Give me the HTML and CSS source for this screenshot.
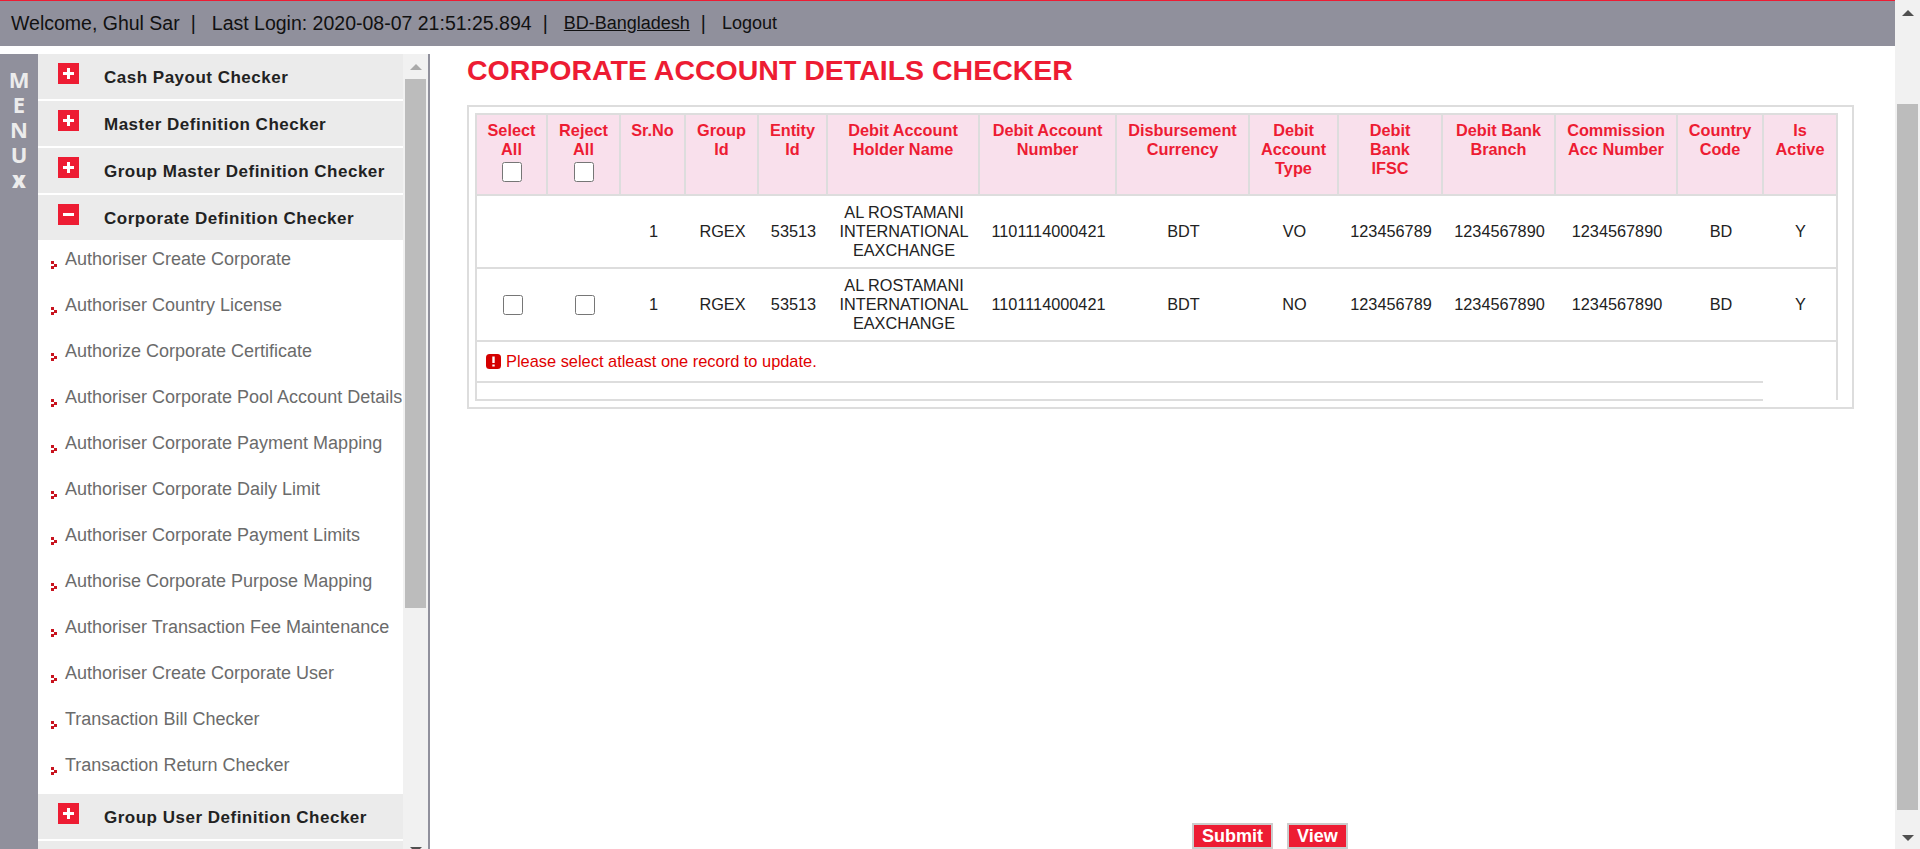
FILE: index.html
```html
<!DOCTYPE html>
<html lang="en">
<head>
    <meta charset="UTF-8">
    <title>Corporate Account Details Checker</title>
    <link rel="stylesheet" href="styles.css">
</head>
<body>
    <div class="page">
        <div class="topbar">
            <span>Welcome, Ghul Sar</span><span class="sep">|</span>
            <span>Last Login: 2020-08-07 21:51:25.894</span><span class="sep">|</span>
            <a href="#" class="country">BD-Bangladesh</a><span class="sep">|</span>
            <a href="#" class="logout">Logout</a>
        </div>
        <div class="layout">
            <aside class="sidebar">
                <div class="menu-tab"><span>M</span><span>E</span><span>N</span><span>U</span><b>x</b></div>
                <nav class="menu">
                    <div class="menu-head"><i class="toggle"><svg viewBox="0 0 21 21"><path d="M5 10.5h11M10.5 5v11"/></svg></i>Cash Payout Checker</div>
                    <div class="menu-head"><i class="toggle"><svg viewBox="0 0 21 21"><path d="M5 10.5h11M10.5 5v11"/></svg></i>Master Definition Checker</div>
                    <div class="menu-head"><i class="toggle"><svg viewBox="0 0 21 21"><path d="M5 10.5h11M10.5 5v11"/></svg></i>Group Master Definition Checker</div>
                    <div class="menu-head open"><i class="toggle"><svg viewBox="0 0 21 21"><path d="M5 10.5h11"/></svg></i>Corporate Definition Checker</div>
                    <ul class="submenu">
                        <li>Authoriser Create Corporate</li>
                        <li>Authoriser Country License</li>
                        <li>Authorize Corporate Certificate</li>
                        <li>Authoriser Corporate Pool Account Details</li>
                        <li>Authoriser Corporate Payment Mapping</li>
                        <li>Authoriser Corporate Daily Limit</li>
                        <li>Authoriser Corporate Payment Limits</li>
                        <li>Authorise Corporate Purpose Mapping</li>
                        <li>Authoriser Transaction Fee Maintenance</li>
                        <li>Authoriser Create Corporate User</li>
                        <li>Transaction Bill Checker</li>
                        <li>Transaction Return Checker</li>
                    </ul>
                    <div class="menu-head"><i class="toggle"><svg viewBox="0 0 21 21"><path d="M5 10.5h11M10.5 5v11"/></svg></i>Group User Definition Checker</div>
                    <div class="menu-head"></div>
                </nav>
                <div class="side-scroll">
                    <span class="arrow-up"></span>
                    <span class="side-thumb"></span>
                    <span class="arrow-down"></span>
                </div>
            </aside>
            <main class="content">
                <h1>CORPORATE ACCOUNT DETAILS CHECKER</h1>
                <div class="frame">
                    <table class="grid">
                        <colgroup>
                            <col class="c71"><col class="c73"><col class="c65"><col class="c73"><col class="c69">
                            <col class="c152"><col class="c137"><col class="c133"><col class="c89"><col class="c104">
                            <col class="c113"><col class="c122"><col class="c86"><col class="c74">
                        </colgroup>
                        <thead>
                            <tr>
                                <th>Select All<br><input type="checkbox"></th>
                                <th>Reject All<br><input type="checkbox"></th>
                                <th>Sr.No</th>
                                <th>Group Id</th>
                                <th>Entity Id</th>
                                <th>Debit Account Holder Name</th>
                                <th>Debit Account Number</th>
                                <th>Disbursement Currency</th>
                                <th>Debit Account Type</th>
                                <th>Debit<br>Bank<br>IFSC</th>
                                <th>Debit Bank Branch</th>
                                <th>Commission Acc Number</th>
                                <th>Country Code</th>
                                <th>Is Active</th>
                            </tr>
                        </thead>
                        <tbody>
                            <tr>
                                <td></td>
                                <td></td>
                                <td>1</td>
                                <td>RGEX</td>
                                <td>53513</td>
                                <td>AL ROSTAMANI INTERNATIONAL EAXCHANGE</td>
                                <td>1101114000421</td>
                                <td>BDT</td>
                                <td>VO</td>
                                <td>123456789</td>
                                <td>1234567890</td>
                                <td>1234567890</td>
                                <td>BD</td>
                                <td>Y</td>
                            </tr>
                            <tr>
                                <td><input type="checkbox"></td>
                                <td><input type="checkbox"></td>
                                <td>1</td>
                                <td>RGEX</td>
                                <td>53513</td>
                                <td>AL ROSTAMANI INTERNATIONAL EAXCHANGE</td>
                                <td>1101114000421</td>
                                <td>BDT</td>
                                <td>NO</td>
                                <td>123456789</td>
                                <td>1234567890</td>
                                <td>1234567890</td>
                                <td>BD</td>
                                <td>Y</td>
                            </tr>
                            <tr class="msg-row">
                                <td colspan="13" class="msg">
                                    <svg class="msg-icon" viewBox="0 0 15 15"><rect width="15" height="15" rx="3.5"/><path d="M7.5 2.5v6.5M7.5 10.5v2"/></svg>Please select atleast one record to update.
                                </td>
                                <td rowspan="2" class="filler"></td>
                            </tr>
                            <tr class="blank-row">
                                <td colspan="13"></td>
                            </tr>
                        </tbody>
                    </table>
                </div>
                <div class="actions">
                    <button type="button" class="btn">Submit</button>
                    <button type="button" class="btn">View</button>
                </div>
            </main>
        </div>
    </div>
    <div class="page-scroll">
        <span class="arrow-up"></span>
        <span class="page-thumb"></span>
        <span class="arrow-down"></span>
    </div>
</body>
</html>
```

FILE: styles.css
```css
html, body {
    margin: 0;
    padding: 0;
    height: 100%;
    overflow: hidden;
}

body {
    display: flex;
    font-family: "Liberation Sans", Arial, sans-serif;
    background-color: #ffffff;
    color: #222222;
}

.page {
    flex: 1;
    min-width: 0;
    display: flex;
    flex-direction: column;
}

/* Barra superior */
.topbar {
    height: 46px;
    box-sizing: border-box;
    border-top: 1px solid #ed1c33;
    background-color: #90909c;
    display: flex;
    align-items: center;
    padding-left: 11px;
    font-size: 19.5px;
    color: #111111;
    flex: none;
}

.topbar .sep {
    margin: 0 16px 0 11px;
}

.topbar a {
    color: #111111;
    font-size: 18px;
}

.topbar .logout {
    text-decoration: none;
}

.layout {
    flex: 1;
    display: flex;
    min-height: 0;
    padding-top: 8px;
}

/* Menu lateral */
.sidebar {
    width: 430px;
    flex: none;
    display: flex;
    box-sizing: border-box;
    border-right: 2px solid #90909c;
    overflow: hidden;
}

.menu-tab {
    width: 38px;
    flex: none;
    background-color: #90909c;
    color: #ececec;
    font-family: "Open Sans", sans-serif;
    font-size: 22px;
    font-weight: 700;
    line-height: 25px;
    text-align: center;
    padding-top: 13px;
    box-sizing: border-box;
}

.menu-tab span, .menu-tab b {
    display: block;
}

.menu-tab b {
    font-weight: 800;
}

.menu {
    width: 365px;
    flex: none;
}

.menu-head {
    height: 45px;
    margin-bottom: 2px;
    background-color: #ebebeb;
    display: flex;
    align-items: center;
    font-size: 17px;
    font-weight: bold;
    letter-spacing: 0.5px;
    color: #222222;
    padding-top: 2px;
    box-sizing: border-box;
}

.menu-head.open {
    margin-bottom: 0;
}

.toggle {
    width: 21px;
    height: 21px;
    margin: -8px 25px 0 20px;
    background-color: #ed1c33;
    flex: none;
    display: flex;
}

.toggle svg {
    width: 21px;
    height: 21px;
    stroke: #ffffff;
    stroke-width: 3;
    fill: none;
}

.submenu {
    list-style: none;
    margin: 0;
    padding: 0;
    height: 554px;
}

.submenu li {
    height: 46px;
    box-sizing: border-box;
    padding: 7px 0 0 27px;
    font-size: 18px;
    line-height: 24px;
    color: #6b6b6b;
    position: relative;
    white-space: nowrap;
}

.submenu li::before {
    content: "";
    position: absolute;
    left: 13px;
    top: 21px;
    width: 3px;
    height: 3px;
    background-color: #c8141f;
    box-shadow: 3px 3px 0 #c8141f, 0 5px 0 #c8141f;
}

.side-scroll, .page-scroll {
    background-color: #f1f1f1;
    position: relative;
    flex: none;
    width: 25px;
}

.side-thumb, .page-thumb {
    position: absolute;
    left: 2px;
    right: 2px;
    background-color: #bcbcbc;
}

.side-thumb {
    top: 25px;
    height: 529px;
}

.page-thumb {
    top: 104px;
    height: 706px;
}

.arrow-up, .arrow-down {
    position: absolute;
    left: 7px;
    width: 0;
    height: 0;
    border-left: 6px solid transparent;
    border-right: 6px solid transparent;
}

.arrow-up {
    top: 10px;
    border-bottom: 6px solid #505050;
}

.arrow-down {
    bottom: 8px;
    border-top: 6px solid #505050;
}

.side-scroll .arrow-up {
    border-bottom-color: #a9a9a9;
}

/* la flecha de abajo queda cortada por la ventana */
.side-scroll .arrow-down {
    bottom: auto;
    top: 793px;
}

/* Contenido */
.content {
    flex: 1;
    min-width: 0;
    padding-left: 37px;
}

h1 {
    margin: 0;
    font-size: 28.5px;
    line-height: 32px;
    font-weight: bold;
    color: #ed1c33;
}

.frame {
    width: 1387px;
    box-sizing: border-box;
    margin-top: 19px;
    border: 2px solid #dddddd;
    padding: 6px 16px 6px 6px;
}

.grid {
    width: 1363px;
    table-layout: fixed;
    border-collapse: collapse;
    font-size: 16.3px;
    line-height: 19px;
    text-align: center;
}

.c71 { width: 71px; }
.c73 { width: 73px; }
.c65 { width: 65px; }
.c69 { width: 69px; }
.c152 { width: 152px; }
.c137 { width: 137px; }
.c133 { width: 133px; }
.c89 { width: 89px; }
.c104 { width: 104px; }
.c113 { width: 113px; }
.c122 { width: 122px; }
.c86 { width: 86px; }
.c74 { width: 74px; }

.grid th {
    background-color: #f9e0ec;
    color: #ed1c33;
    font-weight: bold;
    border: 2px solid #dddddd;
    vertical-align: top;
    padding: 6px 6px 0;
    height: 81px;
    box-sizing: border-box;
}

.grid th input {
    margin: 3px 0 0;
}

.grid td {
    border: 2px solid #dddddd;
    border-left: none;
    border-right: none;
    padding: 7px 5px 7px 7px;
    height: 57px;
    color: #222222;
}

.grid tbody tr td:first-child {
    border-left: 2px solid #dddddd;
}

.grid tbody tr td:last-child {
    border-right: 2px solid #dddddd;
}

.grid input[type="checkbox"] {
    width: 20px;
    height: 20px;
    vertical-align: middle;
}

.grid tbody input[type="checkbox"] {
    margin: 0;
}

.grid .msg {
    height: 39px;
    padding: 0 9px;
    color: #e00000;
    text-align: left;
    font-size: 16.4px;
}

.msg-icon {
    width: 15px;
    height: 15px;
    vertical-align: -2px;
    margin-right: 5px;
    stroke: #ffffff;
    stroke-width: 2.4;
    fill: #d40000;
}

.msg-icon rect {
    stroke: none;
}

.grid tbody tr.blank-row td {
    height: 16px;
    padding: 0;
    border-right: none;
}

.grid td.filler {
    border-bottom: none;
    padding: 0;
}

.actions {
    margin: 414px 0 0 725px;
    display: flex;
    gap: 14px;
}

.btn {
    height: 26px;
    box-sizing: border-box;
    background-color: #ed1c33;
    color: #ffffff;
    border: 2px solid #cccccc;
    font-family: "Liberation Sans", Arial, sans-serif;
    font-size: 18px;
    font-weight: bold;
    padding: 0 8px;
    line-height: 20px;
}
```
